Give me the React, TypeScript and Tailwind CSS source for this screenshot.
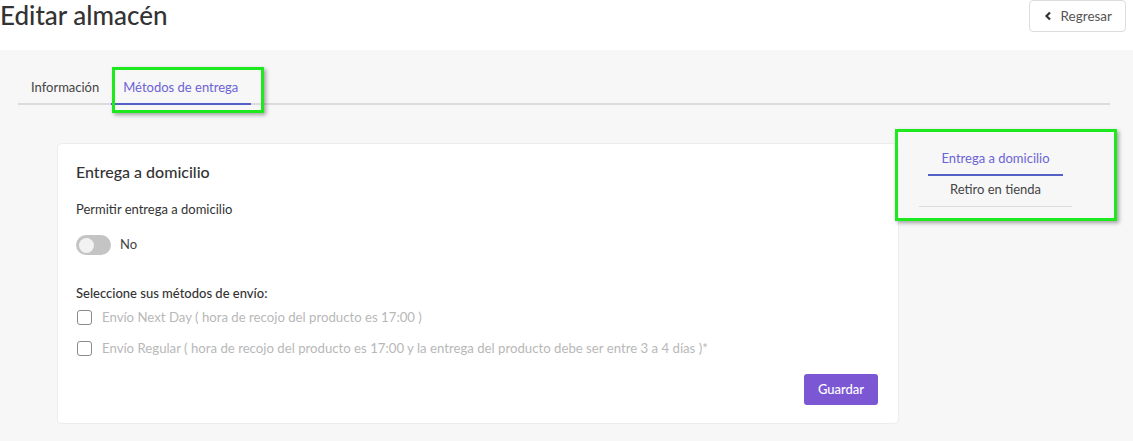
import React from "react";

export default function App() {
  return (
    <div className="relative w-[1133px] h-[441px] bg-[#f7f7f7] text-[#3b3b3b] overflow-hidden" style={{ fontFamily: "Lato, 'Noto Sans', sans-serif" }}>
      <div className="h-[50px] bg-white flex justify-between items-start">
        <h1 className="text-[26px] leading-[30px] font-medium text-[#333]">Editar almacén</h1>
        <button className="mr-[7px] h-[32px] pl-[14px] pr-[13px] flex items-center gap-[9px] border border-[#dcdcdc] rounded-[4px] bg-white text-[13.5px] text-[#555]">
          <svg width="8" height="10" viewBox="0 0 8 10"><path d="M6 1.5 L2.5 5 L6 8.5" fill="none" stroke="#333" strokeWidth="2.2" /></svg>
          <span>Regresar</span>
        </button>
      </div>
      <div className="mt-[18px] ml-[18px] mr-[23px] flex border-b-2 border-[#dcdcdc]">
        <div className="pl-[13px] pr-[12px] pt-[9px] pb-[6px] text-[13px] leading-[20px] text-[#444]">Información</div>
        <div className="pl-[12px] pr-[13px] pt-[9px] pb-[6px] text-[13px] leading-[20px] text-[#6c63d6] border-b-2 border-[#5361c6] -mb-[2px]">Métodos de entrega</div>
      </div>
      <div className="mt-[38px] ml-[57px] flex items-start">
        <div className="w-[842px] h-[281px] bg-white border border-[#ececec] rounded-[5px] pl-[18px] pr-[20px] pt-[17px] flex flex-col">
          <div className="text-[16px] leading-[22px] font-medium text-[#333]">Entrega a domicilio</div>
          <div className="mt-[16px] text-[13px] leading-[20px] text-[#333]">Permitir entrega a domicilio</div>
          <div className="mt-[16px] flex items-center gap-[9px]">
            <div className="w-[35px] h-[20px] rounded-full bg-[#c4c4c4] flex items-center pl-[3px]">
              <div className="w-[15px] h-[15px] rounded-full bg-[#f2f2f2]"></div>
            </div>
            <span className="text-[13px] text-[#444]">No</span>
          </div>
          <div className="mt-[28px] text-[13px] leading-[20px] font-medium text-[#333]">Seleccione sus métodos de envío:</div>
          <div className="mt-[4px] flex items-center gap-[10px] text-[13.2px] leading-[20px] text-[#b8b8b8]">
            <div className="ml-[1px] w-[15px] h-[15px] border border-[#8a8a8a] rounded-[3px]"></div>
            <span>Envío Next Day ( hora de recojo del producto es 17:00 )</span>
          </div>
          <div className="mt-[11px] flex items-center gap-[10px] text-[13.2px] leading-[20px] text-[#b8b8b8]">
            <div className="ml-[1px] w-[15px] h-[15px] border border-[#8a8a8a] rounded-[3px]"></div>
            <span>Envío Regular ( hora de recojo del producto es 17:00 y la entrega del producto debe ser entre 3 a 4 días )*</span>
          </div>
          <div className="mt-[16px] flex justify-end">
            <button className="w-[74px] h-[31px] rounded-[3px] bg-[#7b57d4] text-white text-[13px] font-medium">Guardar</button>
          </div>
        </div>
        <div className="ml-[20px] w-[153px] flex flex-col text-[13px] leading-[20px]">
          <div className="mx-[9px] pt-[5px] pb-[6px] text-center text-[#6c63d6] border-b-2 border-[#5361c6]">Entrega a domicilio</div>
          <div className="pt-[3px] pb-[7px] text-center text-[#444] border-b border-[#dcdcdc]">Retiro en tienda</div>
        </div>
      </div>
      <div className="absolute left-[112px] top-[67px] w-[152px] h-[46px] border-[3px] border-[#1ee81e] shadow-[2px_2px_4px_rgba(0,0,0,0.35)]"></div>
      <div className="absolute left-[895px] top-[129px] w-[222px] h-[92px] border-[3px] border-[#1ee81e] shadow-[2px_2px_4px_rgba(0,0,0,0.35)]"></div>
    </div>
  );
}
